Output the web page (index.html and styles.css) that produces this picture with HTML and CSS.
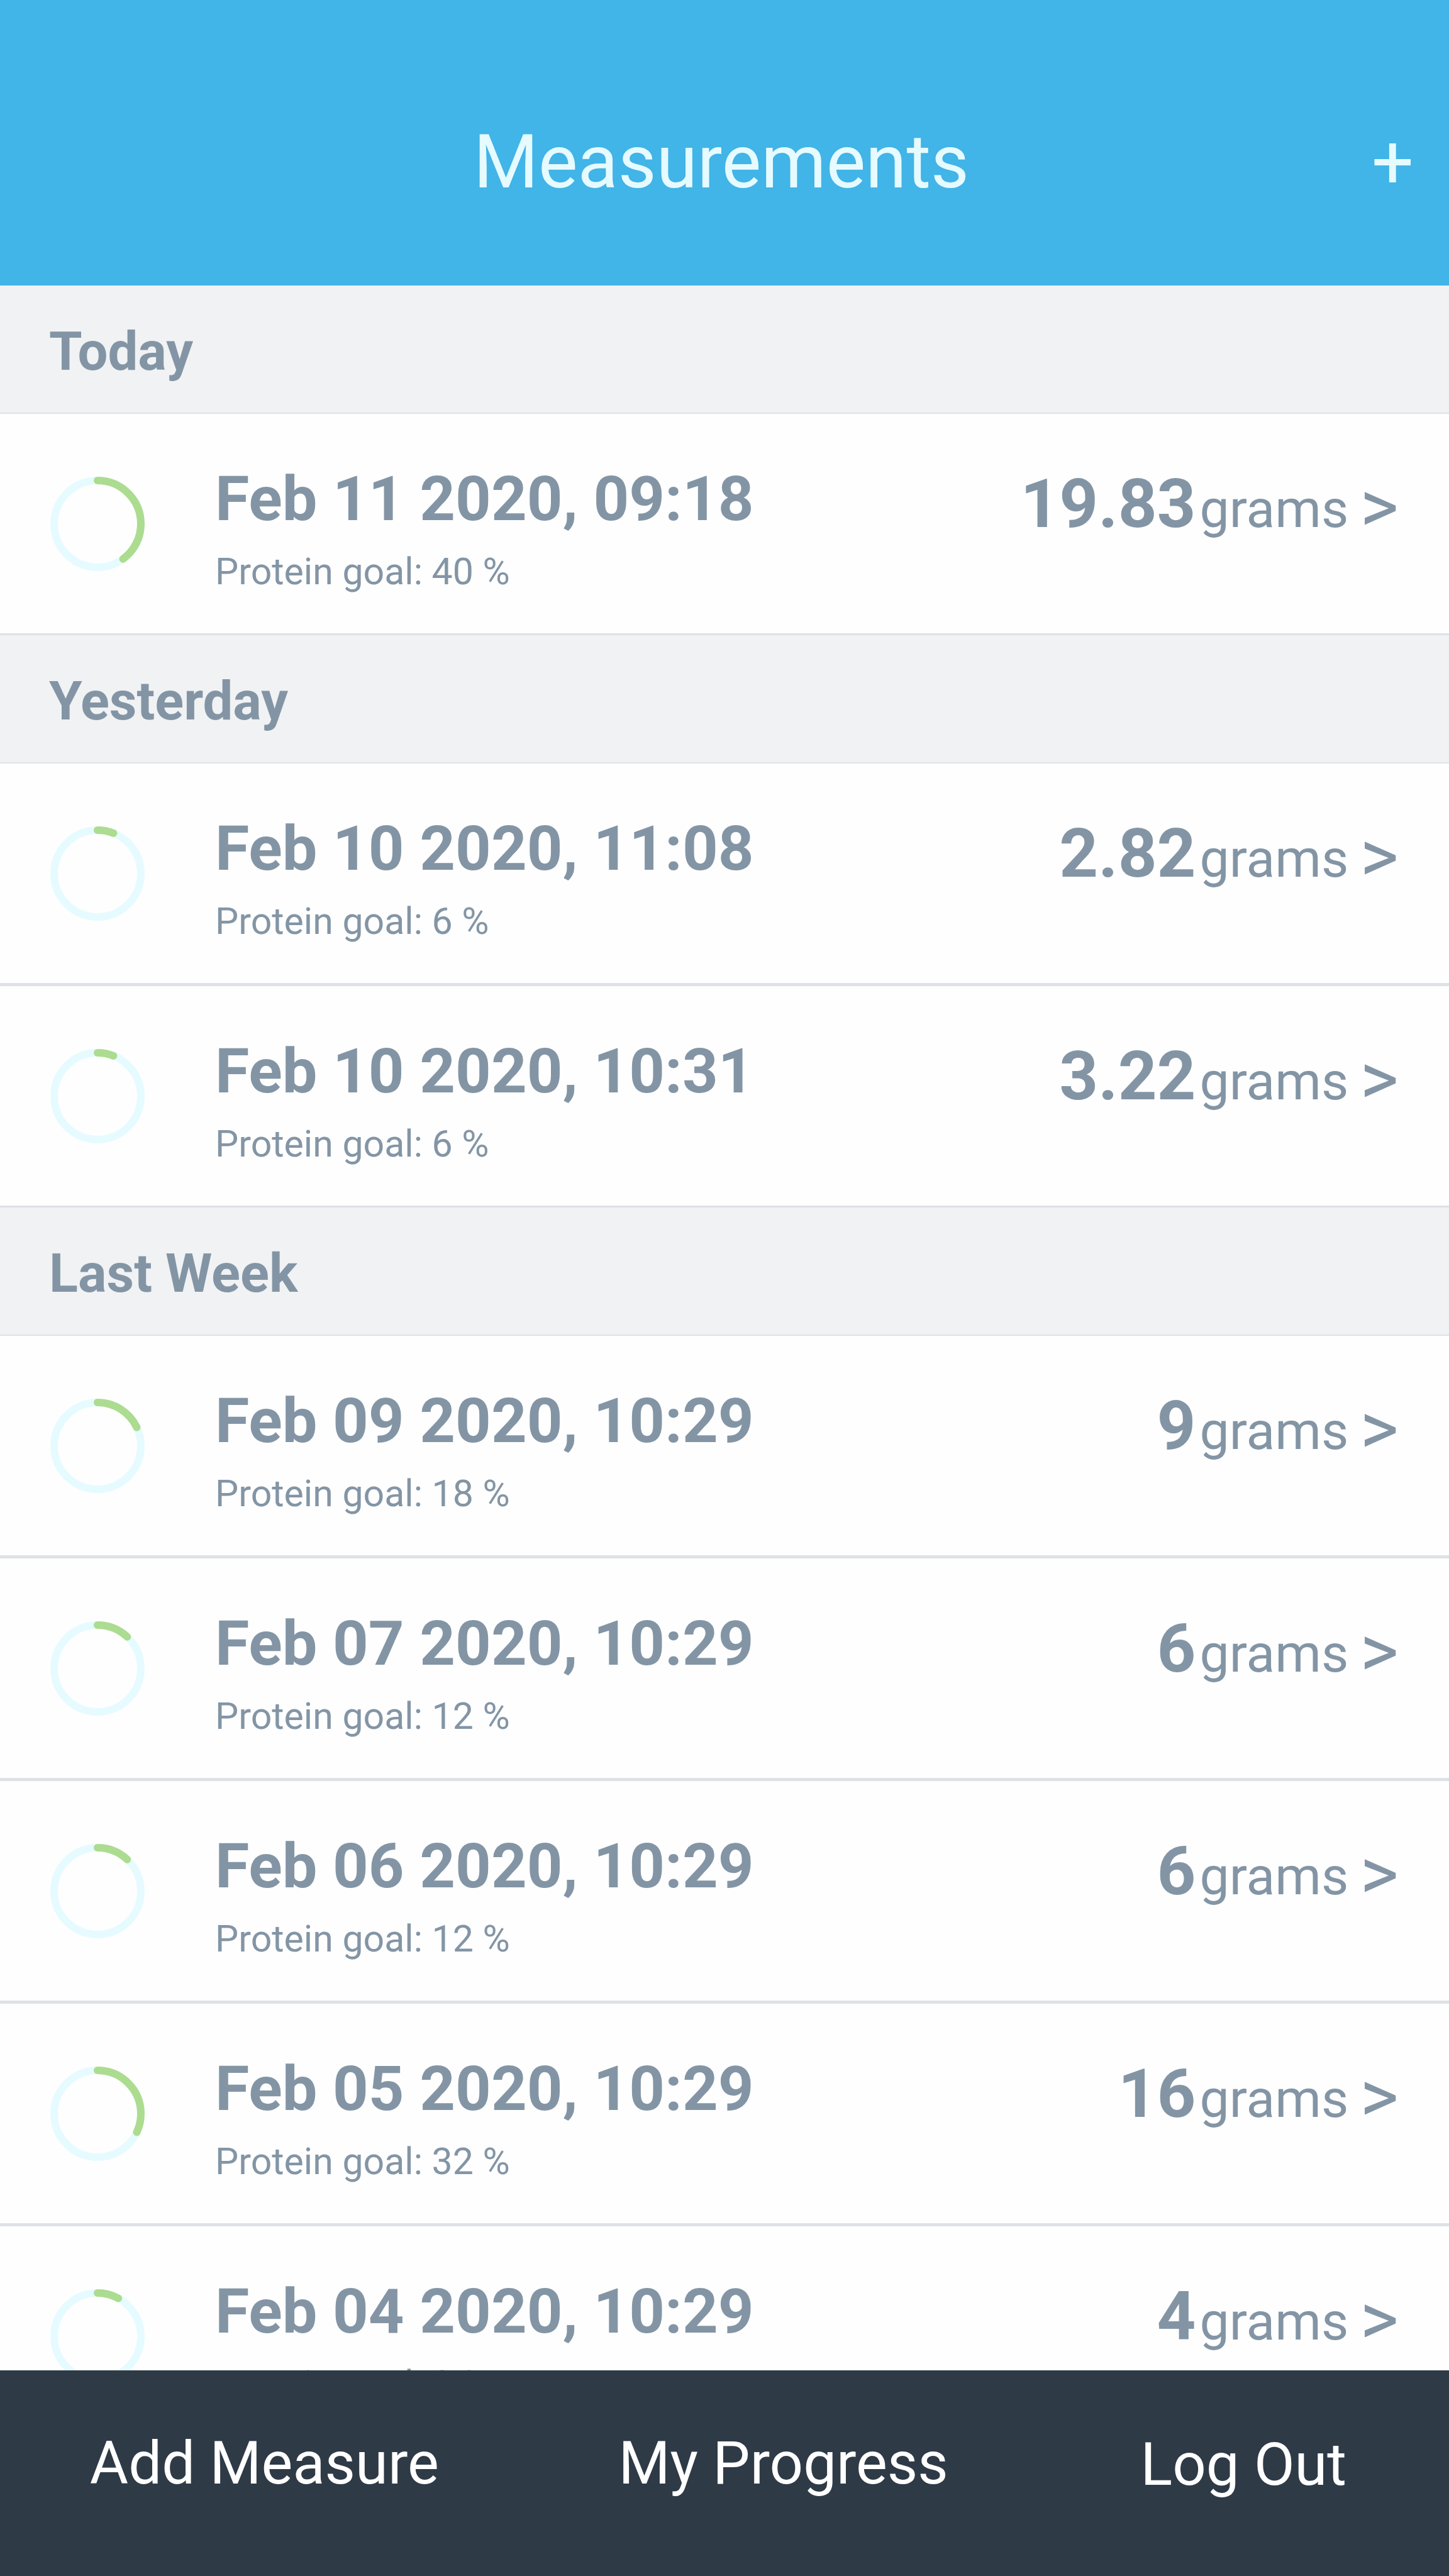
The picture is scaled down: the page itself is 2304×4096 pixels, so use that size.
FILE: index.html
```html
<!DOCTYPE html>
<html lang="en">
<head>
<meta charset="utf-8">
<meta name="viewport" content="width=device-width, initial-scale=1">
<title>Measurements</title>
<link rel="stylesheet" href="styles.css">
</head>
<body>
<header class="topbar">
  <h1 class="topbar-title">Measurements</h1>
  <button class="topbar-add" type="button" aria-label="Add measurement">+</button>
</header>

<main class="list">
  <section>
    <h2 class="group">Today</h2>
    <a class="row" href="#m1">
      <svg class="ring" viewBox="0 0 150 150" aria-hidden="true"><circle class="ring-track" cx="75" cy="75" r="69"/><circle class="ring-value" cx="75" cy="75" r="69" pathLength="100" stroke-dasharray="40 100"/></svg>
      <span class="info"><span class="date">Feb 11 2020, 09:18</span><span class="goal">Protein goal: 40 %</span></span>
      <span class="amount"><b class="value">19.83</b><span class="unit">grams</span><span class="arrow">&gt;</span></span>
    </a>
  </section>

  <section>
    <h2 class="group">Yesterday</h2>
    <a class="row" href="#m2">
      <svg class="ring" viewBox="0 0 150 150" aria-hidden="true"><circle class="ring-track" cx="75" cy="75" r="69"/><circle class="ring-value" cx="75" cy="75" r="69" pathLength="100" stroke-dasharray="6 100"/></svg>
      <span class="info"><span class="date">Feb 10 2020, 11:08</span><span class="goal">Protein goal: 6 %</span></span>
      <span class="amount"><b class="value">2.82</b><span class="unit">grams</span><span class="arrow">&gt;</span></span>
    </a>
    <a class="row" href="#m3">
      <svg class="ring" viewBox="0 0 150 150" aria-hidden="true"><circle class="ring-track" cx="75" cy="75" r="69"/><circle class="ring-value" cx="75" cy="75" r="69" pathLength="100" stroke-dasharray="6 100"/></svg>
      <span class="info"><span class="date">Feb 10 2020, 10:31</span><span class="goal">Protein goal: 6 %</span></span>
      <span class="amount"><b class="value">3.22</b><span class="unit">grams</span><span class="arrow">&gt;</span></span>
    </a>
  </section>

  <section>
    <h2 class="group">Last Week</h2>
    <a class="row" href="#m4">
      <svg class="ring" viewBox="0 0 150 150" aria-hidden="true"><circle class="ring-track" cx="75" cy="75" r="69"/><circle class="ring-value" cx="75" cy="75" r="69" pathLength="100" stroke-dasharray="18 100"/></svg>
      <span class="info"><span class="date">Feb 09 2020, 10:29</span><span class="goal">Protein goal: 18 %</span></span>
      <span class="amount"><b class="value">9</b><span class="unit">grams</span><span class="arrow">&gt;</span></span>
    </a>
    <a class="row" href="#m5">
      <svg class="ring" viewBox="0 0 150 150" aria-hidden="true"><circle class="ring-track" cx="75" cy="75" r="69"/><circle class="ring-value" cx="75" cy="75" r="69" pathLength="100" stroke-dasharray="12 100"/></svg>
      <span class="info"><span class="date">Feb 07 2020, 10:29</span><span class="goal">Protein goal: 12 %</span></span>
      <span class="amount"><b class="value">6</b><span class="unit">grams</span><span class="arrow">&gt;</span></span>
    </a>
    <a class="row" href="#m6">
      <svg class="ring" viewBox="0 0 150 150" aria-hidden="true"><circle class="ring-track" cx="75" cy="75" r="69"/><circle class="ring-value" cx="75" cy="75" r="69" pathLength="100" stroke-dasharray="12 100"/></svg>
      <span class="info"><span class="date">Feb 06 2020, 10:29</span><span class="goal">Protein goal: 12 %</span></span>
      <span class="amount"><b class="value">6</b><span class="unit">grams</span><span class="arrow">&gt;</span></span>
    </a>
    <a class="row" href="#m7">
      <svg class="ring" viewBox="0 0 150 150" aria-hidden="true"><circle class="ring-track" cx="75" cy="75" r="69"/><circle class="ring-value" cx="75" cy="75" r="69" pathLength="100" stroke-dasharray="32 100"/></svg>
      <span class="info"><span class="date">Feb 05 2020, 10:29</span><span class="goal">Protein goal: 32 %</span></span>
      <span class="amount"><b class="value">16</b><span class="unit">grams</span><span class="arrow">&gt;</span></span>
    </a>
    <a class="row" href="#m8">
      <svg class="ring" viewBox="0 0 150 150" aria-hidden="true"><circle class="ring-track" cx="75" cy="75" r="69"/><circle class="ring-value" cx="75" cy="75" r="69" pathLength="100" stroke-dasharray="8 100"/></svg>
      <span class="info"><span class="date">Feb 04 2020, 10:29</span><span class="goal">Protein goal: 8 %</span></span>
      <span class="amount"><b class="value">4</b><span class="unit">grams</span><span class="arrow">&gt;</span></span>
    </a>
  </section>
</main>

<nav class="tabs">
  <a class="tab" href="#add">Add Measure</a>
  <a class="tab" href="#progress">My Progress</a>
  <button class="tab tab-button" type="button">Log Out</button>
</nav>
</body>
</html>
```
FILE: styles.css
```css
* {
  box-sizing: border-box;
}

body {
  margin: 0;
  height: 100vh;
  display: flex;
  flex-direction: column;
  overflow: hidden;
  background: #fefefe;
  color: #8395a5;
  font-family: Roboto, "Liberation Sans", sans-serif;
}

button {
  margin: 0;
  padding: 0;
  border: 0;
  background: none;
  color: inherit;
  font: inherit;
}

a {
  color: inherit;
  text-decoration: none;
}

.topbar {
  flex: none;
  display: grid;
  grid-template-columns: 1fr auto 1fr;
  padding: 189px 56px 127px;
  background: #41b4e8;
  color: #e6fbff;
  font-size: 118px;
  line-height: 138px;
}

.topbar-title {
  grid-column: 2;
  margin: 0;
  padding-right: 10px;
  font-size: inherit;
  font-weight: 400;
}

.topbar-add {
  justify-self: end;
}

.list {
  flex: 1;
  min-height: 0;
  overflow: hidden;
}

.group {
  margin: 0;
  padding: 55px 78px 47px;
  background: #f0f2f4;
  font-size: 85px;
  font-weight: 700;
  line-height: 100px;
}

.row {
  display: flex;
  align-items: flex-start;
  padding: 77px 80px 63px;
  border-top: 2px solid #dee2e6;
  border-bottom: 3px solid #dee2e6;
}

.ring {
  flex: none;
  width: 150px;
  height: 150px;
  margin: 23px 112px 0 0;
}

.ring circle {
  fill: none;
  stroke-width: 12px;
}

.ring-track {
  stroke: #e6fbff;
}

.ring-value {
  stroke: #acdc90;
  stroke-linecap: round;
  transform: rotate(-90deg);
  transform-origin: center;
}

.info {
  flex: 1;
  display: flex;
  flex-direction: column;
  gap: 23px;
}

.date {
  font-size: 99px;
  font-weight: 700;
  line-height: 116px;
}

.goal {
  font-size: 59px;
  line-height: 70px;
}

.amount {
  display: flex;
  align-items: baseline;
  line-height: 132px;
}

.value {
  font-size: 108px;
  font-weight: 700;
}

.unit {
  margin-left: 6px;
  font-size: 84px;
}

.arrow {
  align-self: flex-start;
  margin-left: 18px;
  font-size: 118px;
  line-height: 142px;
}

.tabs {
  flex: none;
  display: flex;
  justify-content: space-around;
  padding: 92px 0 121px;
  background: #2f3a47;
  color: #fff;
  font-size: 94px;
  line-height: 112px;
}

.tab-button {
  padding: 2px 20px 0;
}
```
